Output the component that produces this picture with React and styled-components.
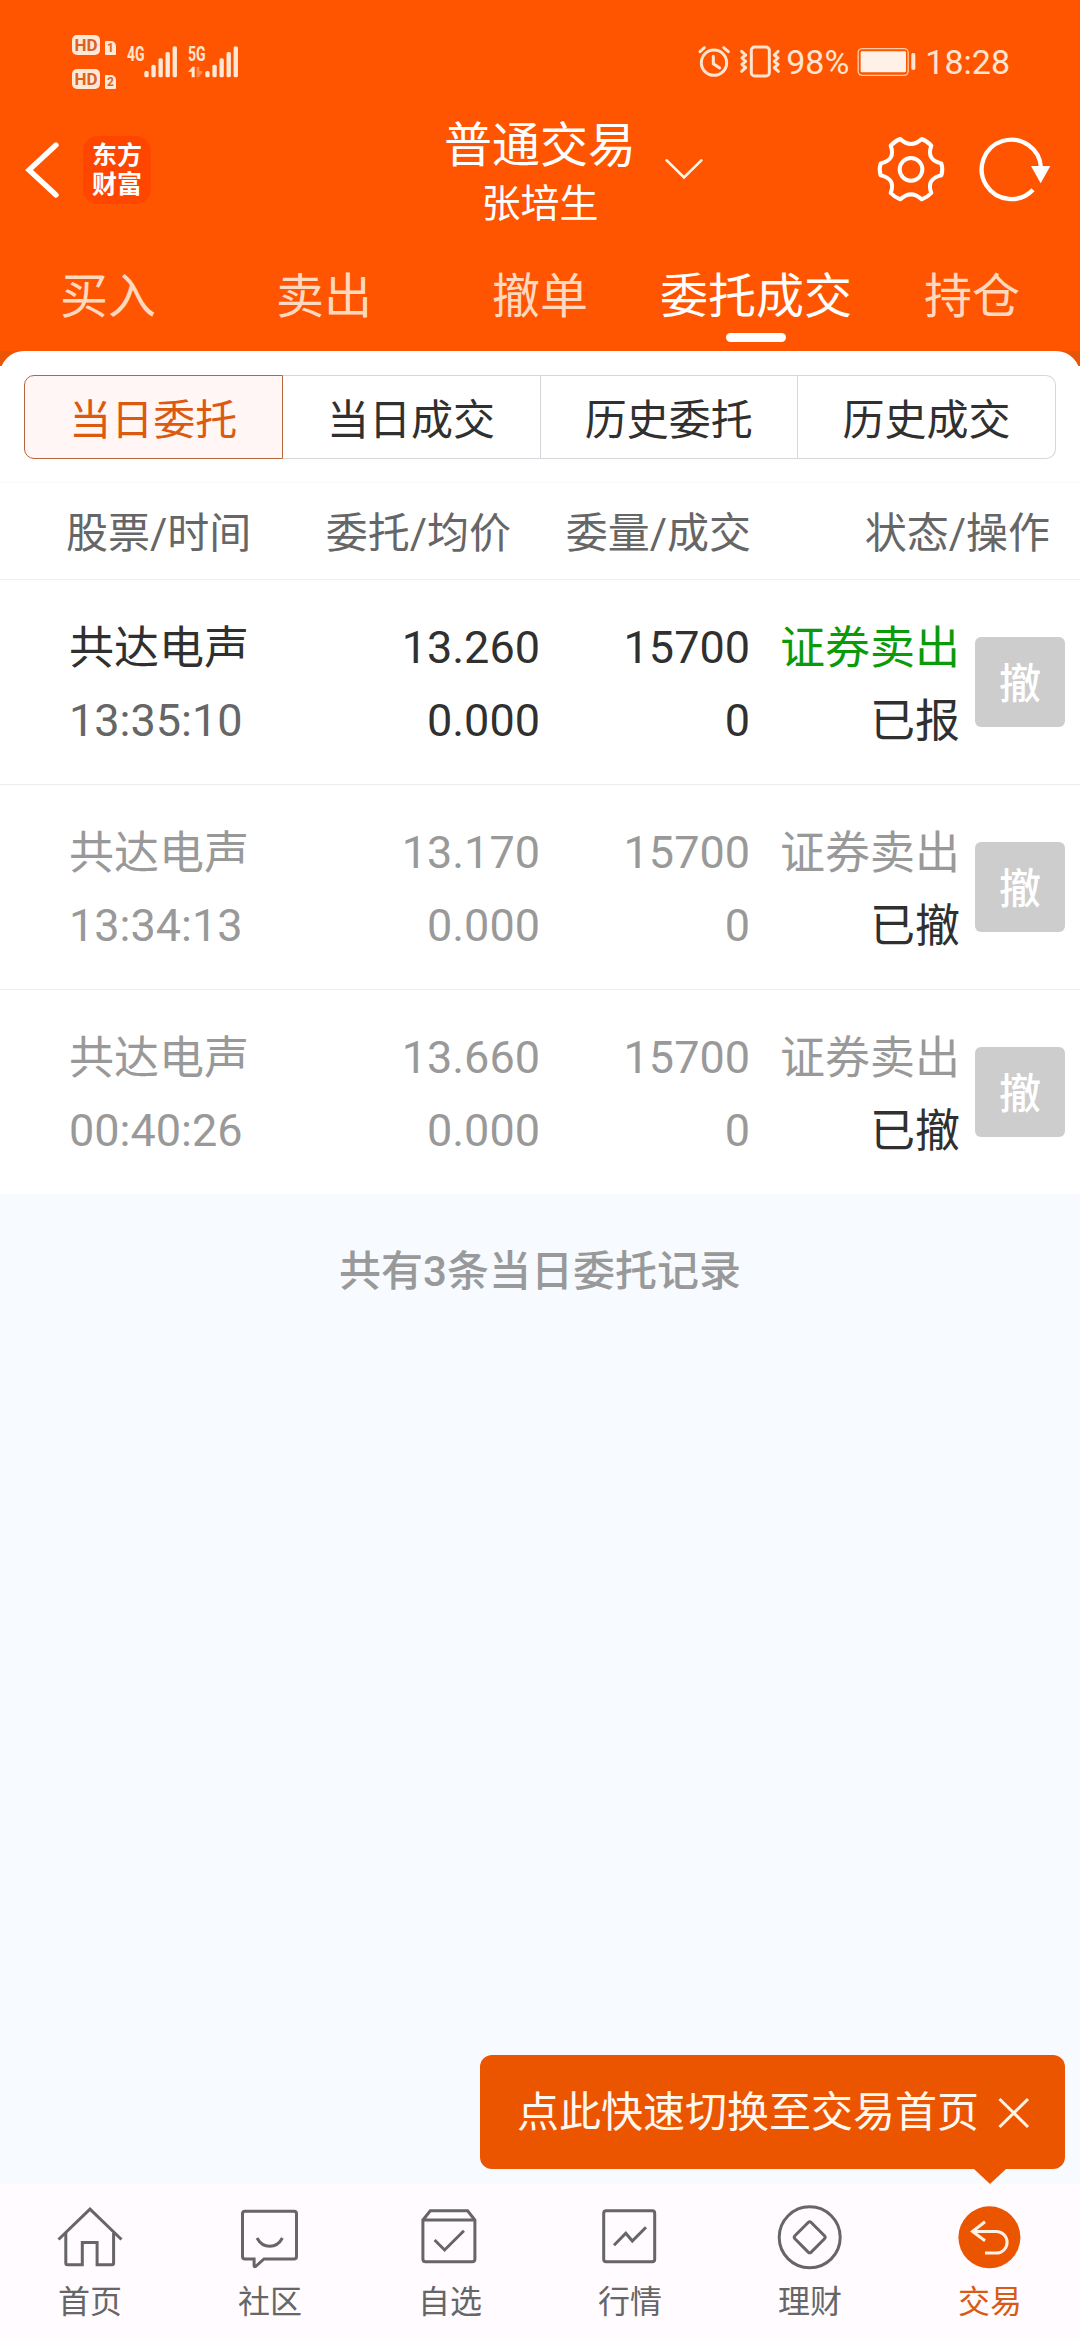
import styled, { createGlobalStyle, css } from 'styled-components'

const tabs = ['买入', '卖出', '撤单', '委托成交', '持仓']
const segments = ['当日委托', '当日成交', '历史委托', '历史成交']
const orders = [
  { time: '13:35:10', price: '13.260', status: '已报', open: true },
  { time: '13:34:13', price: '13.170', status: '已撤', open: false },
  { time: '00:40:26', price: '13.660', status: '已撤', open: false },
]
const menu = [
  { label: '首页', Icon: HomeIcon },
  { label: '社区', Icon: ChatIcon },
  { label: '自选', Icon: BoxIcon },
  { label: '行情', Icon: ChartIcon },
  { label: '理财', Icon: CoinIcon },
  { label: '交易', Icon: TradeIcon, active: true },
]

export default function App() {
  return (
    <Screen>
      <GlobalStyle />
      <Header>
        <StatusBar />
        <NavBar />
        <Tabs>
          {tabs.map(tab => (
            <Tab key={tab} $active={tab === '委托成交'}>
              {tab}
            </Tab>
          ))}
        </Tabs>
      </Header>
      <SheetBack>
        <Sheet>
          <Segments>
            {segments.map((segment, index) => (
              <Segment key={segment} $active={index === 0}>
                {segment}
              </Segment>
            ))}
          </Segments>
          <TableHead>
            <span>股票/时间</span>
            <span>委托/均价</span>
            <span>委量/成交</span>
            <span>状态/操作</span>
          </TableHead>
          {orders.map(order => (
            <Order key={order.time} {...order} />
          ))}
        </Sheet>
      </SheetBack>
      <Summary>共有3条当日委托记录</Summary>
      <Menu>
        {menu.map(({ label, Icon, active }) => (
          <MenuItem key={label} $active={active}>
            <Icon />
            {label}
          </MenuItem>
        ))}
      </Menu>
      <Hint>
        点此快速切换至交易首页
        <svg width="34" height="34" viewBox="0 0 34 34">
          <path d="M2.5 3 31 31M31 3 2.5 31" stroke="#fff3e6" strokeWidth="3" />
        </svg>
      </Hint>
    </Screen>
  )
}

function StatusBar() {
  return (
    <StatusWrapper>
      <HdColumn>
        {[1, 2].map(sim => (
          <HdRow key={sim}>
            <Hd>HD</Hd>
            <Sim>{sim}</Sim>
          </HdRow>
        ))}
      </HdColumn>
      <Network>
        <NetworkName>4G</NetworkName>
        <SignalBars />
      </Network>
      <Network>
        <NetworkName>5G</NetworkName>
        <Traffic width="16" height="12" viewBox="0 0 48 36">
          <path d="M0 18 14 2h6v32h-9V17z" fill="#ffe9d6" />
          <path d="M26 2h8v12l12 2-14 18h-6z" fill="#ff8a4a" />
        </Traffic>
        <SignalBars />
      </Network>
      <StatusRight>
        <svg width="34" height="34" viewBox="111 134 102 102" fill="none" stroke="#ffe5d0" strokeWidth="9" strokeLinecap="round" strokeLinejoin="round">
          <circle cx="162" cy="187" r="38" />
          <path d="M160 168v22l19 13M120 154l13-12M191 142l14 12" />
        </svg>
        <VibrateIcon width="42" height="34" viewBox="238 134 126 102" fill="none" stroke="#ffe5d0" strokeLinecap="round" strokeLinejoin="round">
          <rect x="275" y="140" width="54" height="87" rx="10" strokeWidth="9" />
          <path d="M246 153l12 11-11 9 11 10-11 9 11 10-12 11M355 153l-11 11 11 9-11 10 11 9-11 10 12 11" strokeWidth="9" />
        </VibrateIcon>
        <Percent>98%</Percent>
        <svg width="60" height="28" viewBox="592 143 180 84">
          <rect x="595.5" y="145" width="150" height="80" rx="12" fill="none" stroke="#ffc9a3" strokeWidth="4" />
          <rect x="603" y="153" width="136" height="63" rx="4" fill="#fff0e8" />
          <rect x="755" y="158" width="12" height="51" rx="5" fill="#ffe5d0" />
        </svg>
        <Clock>18:28</Clock>
      </StatusRight>
    </StatusWrapper>
  )
}

function SignalBars() {
  const tops = [210, 191, 172, 153, 136]
  return (
    <Bars width="33" height="32" viewBox="430 135 99 96">
      {tops.map((top, index) => (
        <rect key={top} x={431 + index * 21.2} y={top} width="13" height={229 - top} rx="5" fill="#ffe9d6" />
      ))}
    </Bars>
  )
}

function NavBar() {
  return (
    <NavWrapper>
      <NavLeft>
        <svg width="36" height="60" viewBox="76 419 108 180">
          <path d="M169 434 88 509l81 75" fill="none" stroke="#fff" strokeWidth="16" strokeLinecap="round" />
        </svg>
        <Logo>东方财富</Logo>
      </NavLeft>
      <Titles>
        <Title>普通交易</Title>
        <Name>张培生</Name>
      </Titles>
      <NavRight>
        <ChevronIcon width="40" height="24" viewBox="12 470 120 72">
          <path d="M20 480l52 51 52-51" fill="none" stroke="#fff4e8" strokeWidth="8" strokeLinecap="round" />
        </ChevronIcon>
        <GearIcon width="72" height="72" viewBox="644 398 216 216" fill="none" stroke="#fff" strokeWidth="12" strokeLinejoin="round">
          <circle cx="752" cy="507" r="34" />
          <path d="M720 416Q752 446 784 416Q801 422 813 436C801 466 815 483 843 489Q849 507 843 525C815 531 801 548 813 578Q801 591 784 597Q752 567 720 597Q703 591 691 578C703 548 689 531 661 525Q655 507 661 489C689 483 703 466 691 436Q703 422 720 416Z" />
        </GearIcon>
        <svg width="78" height="72" viewBox="944 398 234 216">
          <path d="M1142 503A89 89 0 1 0 1118 568" fill="none" stroke="#fff" strokeWidth="13" />
          <path d="M1112 497h58l-29 52z" fill="#fff" />
        </svg>
      </NavRight>
    </NavWrapper>
  )
}

function Order({ time, price, status, open }) {
  return (
    <OrderWrapper $open={open}>
      <Cell $left>
        <Label>共达电声</Label>
        <Time $open={open}>{time}</Time>
      </Cell>
      <Cell>
        <span>{price}</span>
        <span>0.000</span>
      </Cell>
      <Cell>
        <span>15700</span>
        <span>0</span>
      </Cell>
      <Cell>
        <Side $open={open}>证券卖出</Side>
        <Status>{status}</Status>
      </Cell>
      <CancelButton>撤</CancelButton>
    </OrderWrapper>
  )
}

function HomeIcon() {
  return (
    <Icon>
      <path d="M1.5 35.5 33 5.2l31.5 30.3" />
      <path d="M8.8 29v30.2q0 1.5 1.5 1.5h15V38.4h14.8v22.3h15q1.5 0 1.5-1.5V29" />
    </Icon>
  )
}

function ChatIcon() {
  return (
    <Icon>
      <path d="M8 7.3h49q2.5 0 2.5 2.5v42.7q0 2.5-2.5 2.5H27l-8.5 7.5q-1.4.8-1.4-1V55H8q-2.5 0-2.5-2.5V9.8q0-2.5 2.5-2.5z" />
      <path d="M20 34q4.5 8.3 12.7 8.3T45.4 34" />
    </Icon>
  )
}

function BoxIcon() {
  return (
    <Icon>
      <path d="M5.9 16 13.3 6.7h37.3L57.9 16v39q0 2.7-2.7 2.7H8.6q-2.7 0-2.7-2.7zM5.9 16h52" />
      <path d="m17.6 36 10 10 19.3-19.3" />
    </Icon>
  )
}

function ChartIcon() {
  return (
    <Icon>
      <rect x="6.7" y="6.7" width="51" height="51" rx="2.5" />
      <path d="m17 41.3 11.8-12 6.5 7.7L49 23.3" />
    </Icon>
  )
}

function CoinIcon() {
  return (
    <Icon>
      <circle cx="32.7" cy="33.3" r="30.5" />
      <path d="M31.2 18.5q1.500-1.500 3 0l13.300 13.300q1.500 1.500 0 3L34.200 48.100q-1.500 1.500-3 0L17.900 34.800q-1.500-1.500 0-3z" />
    </Icon>
  )
}

function TradeIcon() {
  return (
    <Icon>
      <circle cx="32.4" cy="33.3" r="31" fill="#ec5500" stroke="none" />
      <path d="M28 17.7 15.5 27.500 28 36.700M15.500 27.500h23.800a10.800 10.800 0 0 1 0 21.600H28" stroke="#fff0e4" />
    </Icon>
  )
}

const GlobalStyle = createGlobalStyle`
  * {
    box-sizing: border-box;
  }
  body {
    margin: 0;
    font-family: Roboto, 'Noto Sans CJK SC', sans-serif;
  }
  svg {
    display: block;
    flex-shrink: 0;
  }
`

const Screen = styled.div`
  position: relative;
  display: flex;
  flex-direction: column;
  width: 1080px;
  height: 2340px;
  overflow: hidden;
  background: #f7fbff;
  color: #333;
`
const Header = styled.header`
  height: 351px;
  background: #ff5500;
`

const StatusWrapper = styled.div`
  display: flex;
  align-items: center;
  height: 110px;
  padding: 13px 70px 0 72px;
  color: #ffe5d0;
`
const HdColumn = styled.div`
  display: flex;
  flex-direction: column;
  gap: 14px;
`
const HdRow = styled.div`
  display: flex;
  align-items: flex-end;
  gap: 5px;
`
const Hd = styled.span`
  width: 28px;
  height: 20px;
  border-radius: 5px;
  background: #ffe9d6;
  color: #dd611f;
  font-size: 17px;
  font-weight: 700;
  line-height: 21px;
  text-align: center;
`
const Sim = styled.span`
  width: 11px;
  height: 14px;
  border-radius: 1px 5px 1px 1px;
  background: #ffe9d6;
  color: #dd611f;
  font-size: 12px;
  font-weight: 700;
  line-height: 15px;
  text-align: center;
`
const Network = styled.div`
  display: grid;
  grid-template-columns: 17px 33px;
  height: 32px;
  margin-left: 11px;
`
const NetworkName = styled.span`
  grid-area: 1 / 1;
  font-size: 20px;
  font-weight: 700;
  line-height: 16px;
  transform: scaleX(0.7);
  transform-origin: left;
`
const Traffic = styled.svg`
  grid-area: 1 / 1;
  align-self: end;
`
const Bars = styled.svg`
  grid-area: 1 / 2;
`
const StatusRight = styled.div`
  display: flex;
  align-items: center;
  margin-left: auto;
  font-size: 34px;
`
const VibrateIcon = styled.svg`
  margin-left: 8px;
`
const Percent = styled.span`
  margin: 0 8px 0 5px;
`
const Clock = styled.span`
  margin-left: 8px;
`

const NavWrapper = styled.div`
  display: grid;
  grid-template: 120px / 414px 252px 1fr;
  color: #fff;
`
const NavLeft = styled.div`
  display: flex;
  align-items: center;
  gap: 22px;
  padding-left: 25px;
`
const Logo = styled.div`
  width: 68px;
  height: 68px;
  padding: 3px 8px 0;
  border-radius: 15px;
  background: #ff4600;
  font-family: 'Noto Sans CJK SC', sans-serif;
  font-size: 25px;
  font-weight: 700;
  line-height: 29px;
  text-align: center;
`
const Titles = styled.div`
  padding-top: 6px;
  text-align: center;
`
const Title = styled.div`
  font-size: 48px;
  line-height: 60px;
`
const Name = styled.div`
  font-size: 39px;
  line-height: 57px;
`
const NavRight = styled.div`
  display: flex;
  align-items: center;
  padding: 0 27px 2px 0;
`
const ChevronIcon = styled.svg`
  margin-left: -2px;
`
const GearIcon = styled.svg`
  margin: 0 28px 0 auto;
`

const Tabs = styled.nav`
  display: grid;
  grid-template-columns: repeat(5, 1fr);
`
const Tab = styled.div`
  display: flex;
  flex-direction: column;
  align-items: center;
  padding-top: 35px;
  color: ${({ $active }) => ($active ? '#fff' : '#ffd8c0')};
  font-size: 48px;
  line-height: 64px;

  ${({ $active }) =>
    $active &&
    css`
      &::after {
        content: '';
        width: 60px;
        height: 9px;
        margin-top: 4px;
        border-radius: 5px;
        background: #fff;
      }
    `}
`

const SheetBack = styled.main`
  background: linear-gradient(#e95504 15px, #fff 15px);
`
const Sheet = styled.div`
  padding-top: 24px;
  border-radius: 24px 24px 0 0;
  background: #fff;
`
const Segments = styled.div`
  display: flex;
  margin: 0 24px;
`
const Segment = styled.div`
  flex: 1;
  height: 84px;
  border: 1px solid #d6d6dc;
  border-left-width: 0;
  color: #303030;
  font-size: 42px;
  line-height: 89px;
  text-align: center;

  &:first-child {
    border-radius: 10px 0 0 10px;
  }
  &:last-child {
    border-radius: 0 10px 10px 0;
  }

  ${({ $active }) =>
    $active &&
    css`
      border: 1px solid #b5673a;
      background: #fff6f5;
      color: #dc5a10;
    `}
`
const TableHead = styled.div`
  display: grid;
  grid-template-columns: 245px 200px 240px 299px;
  height: 98px;
  margin-top: 23px;
  padding: 4px 0 0 66px;
  border-top: 1px solid #fafafa;
  border-bottom: 1px solid #ededed;
  color: #666;
  font-size: 42px;
  line-height: 94px;
  text-align: right;
  white-space: nowrap;

  span:first-child {
    text-align: left;
  }
`
const OrderWrapper = styled.section`
  display: grid;
  grid-template-columns: 231px 240px 210px 210px 90px;
  height: 205px;
  padding: 31px 0 0 69px;
  border-bottom: 1px solid #ededed;
  color: ${({ $open }) => ($open ? '#303030' : '#999')};
  font-size: 45px;
  line-height: 73px;

  &:last-child {
    height: 204px;
    border-bottom: 0;
  }
`
const Cell = styled.div`
  display: flex;
  flex-direction: column;
  text-align: ${({ $left }) => ($left ? 'left' : 'right')};
`
const Time = styled.span`
  color: ${({ $open }) => ($open ? '#666' : '#999')};
`
// chinese glyphs sit a bit higher than the digits beside them
const Label = styled.span`
  margin: 1px 0 -1px;
`
const Side = styled(Label)`
  color: ${({ $open }) => ($open ? '#0a9a0a' : '#999')};
`
const Status = styled(Label)`
  color: #303030;
`
const CancelButton = styled.button`
  width: 90px;
  height: 90px;
  margin: 26px 0 0 15px;
  padding: 5px 0 0;
  border: 0;
  border-radius: 6px;
  background: #cdcdcd;
  color: #fff;
  font: 500 42px/1 Roboto, 'Noto Sans CJK SC', sans-serif;
`
const Summary = styled.p`
  flex: 1;
  margin: 0;
  padding-top: 46px;
  color: #999;
  font-size: 42px;
  font-weight: 500;
  line-height: 64px;
  text-align: center;
`

const Menu = styled.footer`
  display: grid;
  grid-template-columns: repeat(6, 1fr);
  height: 156px;
  background: #fffbff;
`
const MenuItem = styled.div`
  display: flex;
  flex-direction: column;
  align-items: center;
  padding-top: 20px;
  color: ${({ $active }) => ($active ? '#d95a14' : '#666')};
  font-size: 32px;
  line-height: 40px;
`
const Icon = styled.svg.attrs({ viewBox: '0 0 66 66' })`
  width: 66px;
  height: 66px;
  margin-bottom: 12px;
  fill: none;
  stroke: #666;
  stroke-width: 3;
`
const Hint = styled.div`
  position: absolute;
  right: 15px;
  bottom: 171px;
  display: flex;
  align-items: center;
  justify-content: space-between;
  width: 585px;
  height: 114px;
  padding: 2px 34px 0 37px;
  border-radius: 12px;
  background: #ec5500;
  color: #fff8f0;
  font-size: 42px;
  line-height: 60px;

  &::after {
    content: '';
    position: absolute;
    top: 100%;
    right: 59px;
    border: 16px solid transparent;
    border-top: 15px solid #ec5500;
    border-bottom: 0;
  }
`
